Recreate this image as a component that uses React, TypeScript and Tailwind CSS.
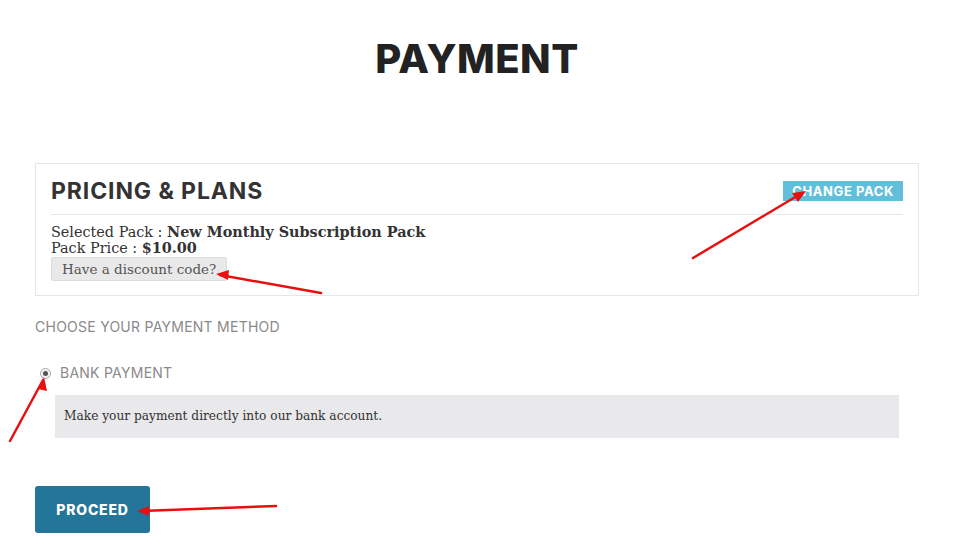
import React from "react";

const head = { fontFamily: "Inter, 'Open Sans', sans-serif" };
const serif = { fontFamily: "'DejaVu Serif', 'Liberation Serif', serif" };

export default function App() {
  return (
    <div className="relative w-[965px] h-[555px] bg-white overflow-hidden">
      <div className="ml-[35px] w-[884px] flex flex-col">
        <h1
          className="text-center text-[40px] font-extrabold leading-none text-[#222] pt-[39px] tracking-[0.5px]"
          style={head}
        >
          PAYMENT
        </h1>

        <div className="mt-[84px] border border-[#e6e6e6] px-[15px] pt-[14px] pb-[14px]">
          <div className="flex items-center justify-between pb-[10px] border-b border-[#e8e8e8]">
            <h2 className="text-[23px] font-bold text-[#333] leading-[26px] tracking-[0.9px]" style={head}>
              PRICING &amp; PLANS
            </h2>
            <span
              className="bg-[#62bfdc] text-white text-[13px] font-bold px-[9px] h-[20px] flex items-center leading-none tracking-[0.6px]"
              style={head}
            >
              CHANGE PACK
            </span>
          </div>
          <div className="pt-[9px] text-[14.4px] leading-[16px] text-[#333]" style={serif}>
            <div>
              Selected Pack : <b>New Monthly Subscription Pack</b>
            </div>
            <div>
              Pack Price : <b>$10.00</b>
            </div>
            <div className="mt-[1px] inline-flex items-center h-[24px] px-[10px] bg-[#e9e9e9] border border-[#dcdcdc] rounded-[2px] text-[13.5px] text-[#555]">
              Have a discount code?
            </div>
          </div>
        </div>

        <div className="mt-[24px] text-[14px] text-[#8a8a8a] leading-none tracking-[0.25px]" style={head}>
          CHOOSE YOUR PAYMENT METHOD
        </div>

        <div className="ml-[5px] mt-[32px] flex items-center gap-[9px]">
          <span className="w-[11px] h-[11px] rounded-full border border-[#aaa] bg-[#f3f3f3] flex items-center justify-center">
            <span className="w-[5px] h-[5px] rounded-full bg-[#555]" />
          </span>
          <span className="text-[14px] text-[#8a8a8a] leading-none tracking-[0.25px]" style={head}>
            BANK PAYMENT
          </span>
        </div>

        <div
          className="ml-[20px] w-[844px] mt-[15px] h-[43px] bg-[#e9e8ea] flex items-center px-[9px] text-[12.2px] text-[#333]"
          style={serif}
        >
          Make your payment directly into our bank account.
        </div>

        <div className="mt-[48px]">
          <span
            className="inline-flex items-center justify-center w-[115px] h-[47px] bg-[#237599] rounded-[3px] text-white text-[14px] font-extrabold tracking-[0.8px]"
            style={head}
          >
            PROCEED
          </span>
        </div>
      </div>

      <svg className="absolute inset-0 pointer-events-none" width="965" height="555">
        <g stroke="#e8100f" strokeWidth="2.5" strokeLinecap="round">
          <line x1="693" y1="258" x2="802" y2="193" />
          <line x1="321" y1="293" x2="220" y2="275" />
          <line x1="10" y1="441" x2="43" y2="380" />
          <line x1="276" y1="506" x2="141" y2="511" />
        </g>
        <g fill="#e8100f">
          <polygon points="806,191 792,193 798,202" />
          <polygon points="216,274 229,270 228,280" />
          <polygon points="44,377 38,389 47,391" />
          <polygon points="137,511 149,506 149,516" />
        </g>
      </svg>
    </div>
  );
}
